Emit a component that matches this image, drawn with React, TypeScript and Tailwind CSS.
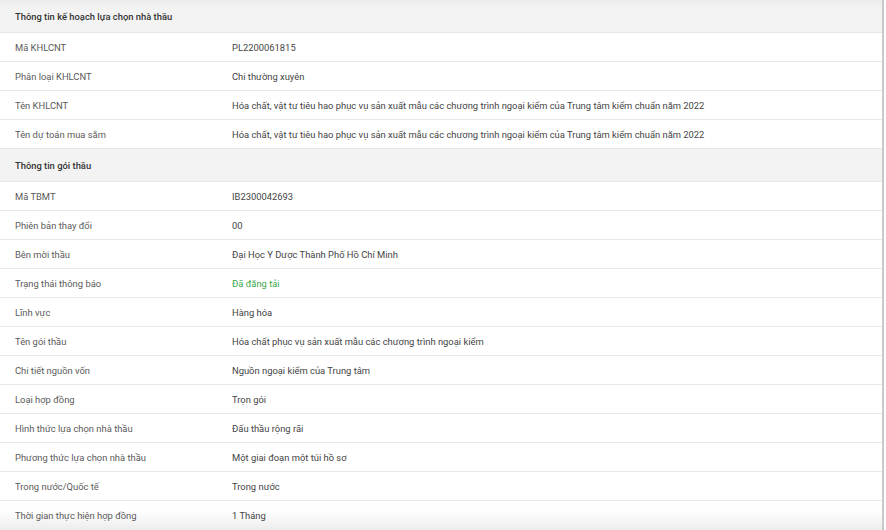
const plan: [string, string][] = [
  ["Mã KHLCNT", "PL2200061815"],
  ["Phân loại KHLCNT", "Chi thường xuyên"],
  ["Tên KHLCNT", "Hóa chất, vật tư tiêu hao phục vụ sản xuất mẫu các chương trình ngoại kiểm của Trung tâm kiểm chuẩn năm 2022"],
  ["Tên dự toán mua sắm", "Hóa chất, vật tư tiêu hao phục vụ sản xuất mẫu các chương trình ngoại kiểm của Trung tâm kiểm chuẩn năm 2022"],
];

const pkg: [string, string][] = [
  ["Mã TBMT", "IB2300042693"],
  ["Phiên bản thay đổi", "00"],
  ["Bên mời thầu", "Đại Học Y Dược Thành Phố Hồ Chí Minh"],
  ["Trạng thái thông báo", "Đã đăng tải"],
  ["Lĩnh vực", "Hàng hóa"],
  ["Tên gói thầu", "Hóa chất phục vụ sản xuất mẫu các chương trình ngoại kiểm"],
  ["Chi tiết nguồn vốn", "Nguồn ngoại kiểm của Trung tâm"],
  ["Loại hợp đồng", "Trọn gói"],
  ["Hình thức lựa chọn nhà thầu", "Đấu thầu rộng rãi"],
  ["Phương thức lựa chọn nhà thầu", "Một giai đoạn một túi hồ sơ"],
  ["Trong nước/Quốc tế", "Trong nước"],
  ["Thời gian thực hiện hợp đồng", "1 Tháng"],
];

function SectionHeader({ title, top }: { title: string; top?: boolean }) {
  return (
    <div
      className={`h-[33px] flex items-center px-[15px] pt-px border-b border-[#e6e6e6] text-[9.4px] font-medium text-[#333] ${
        top ? "bg-gradient-to-b from-[#ececec] to-[#f3f3f3] to-[30%]" : "bg-[#f3f3f3]"
      }`}
    >
      {title}
    </div>
  );
}

function Row({ label, value, last }: { label: string; value: string; last?: boolean }) {
  const green = value === "Đã đăng tải";
  return (
    <div
      className={`h-[29px] flex items-center pt-px border-b border-[#e8e8e8] text-[9.4px] ${
        last ? "bg-gradient-to-b from-white from-[30%] to-[#ededed] border-b-0" : "bg-white"
      }`}
    >
      <div className="w-[232px] shrink-0 pl-[15px] text-[#5a5a5a]">{label}</div>
      <div className={green ? "text-[#3aa84a]" : "text-[#444]"}>{value}</div>
    </div>
  );
}

export default function App() {
  return (
    <div className="w-[886px] h-[530px] bg-white overflow-hidden">
      <div
        className="w-[884px] border-r-2 border-[#c9c9c9] leading-none"
        style={{ fontFamily: "Roboto, 'Liberation Sans', Arial, sans-serif" }}
      >
        <SectionHeader title="Thông tin kế hoạch lựa chọn nhà thầu" top />
        {plan.map(([l, v]) => (
          <Row key={l} label={l} value={v} />
        ))}
        <SectionHeader title="Thông tin gói thầu" />
        {pkg.map(([l, v], i) => (
          <Row key={l} label={l} value={v} last={i === pkg.length - 1} />
        ))}
      </div>
    </div>
  );
}
